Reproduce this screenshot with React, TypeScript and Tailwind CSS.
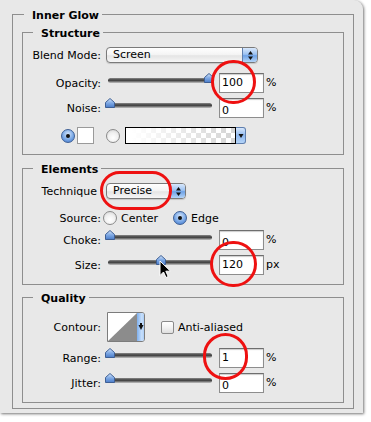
import React from "react";

function Group({
  title,
  labelLeft,
  className,
  children,
}: {
  title: string;
  labelLeft: string;
  className: string;
  children: React.ReactNode;
}) {
  return (
    <div className={`relative shrink-0 border border-[#8e8e8e] ${className}`}>
      <span
        className={`absolute top-0 -translate-y-1/2 bg-[#e8e8e8] pl-[8px] pr-[3px] text-[11px] font-bold leading-[13px] ${labelLeft}`}
      >
        {title}
      </span>
      {children}
    </div>
  );
}

function Label({ children, extra = "" }: { children: React.ReactNode; extra?: string }) {
  return <span className={`w-[78px] shrink-0 text-right text-[11px] leading-[13px] ${extra}`}>{children}</span>;
}

function Thumb({ left, id }: { left: number; id: string }) {
  return (
    <svg className="absolute top-0" style={{ left }} width="10" height="10" viewBox="0 0 10 10">
      <defs>
        <linearGradient id={id} x1="0" y1="0" x2="0" y2="1">
          <stop offset="0" stopColor="#d6e6fb" />
          <stop offset="0.5" stopColor="#7fa9e4" />
          <stop offset="1" stopColor="#4a7cc9" />
        </linearGradient>
      </defs>
      <path d="M5 0.5 L9.5 4.5 V9.5 H0.5 V4.5 Z" fill={`url(#${id})`} stroke="#3e5f94" strokeWidth="1" strokeLinejoin="round" />
    </svg>
  );
}

function Slider({ pos, id }: { pos: number; id: string }) {
  return (
    <div className="relative ml-[4px] h-[20px] w-[110px] shrink-0">
      <div className="absolute left-[3px] right-[3px] top-[5px] h-[5px] rounded-full bg-[linear-gradient(to_bottom,#8a8a8a,#3a3a3a_45%,#8e8e8e_80%,#c8c8c8)]" />
      <Thumb left={pos} id={id} />
    </div>
  );
}

function Field({ value, clipped = false }: { value: string; clipped?: boolean }) {
  return (
    <div className="ml-[4px] h-[20px] w-[45px] shrink-0 overflow-hidden border border-[#8d8d8d] border-t-[#6e6e6e] bg-white shadow-[inset_0_1px_1px_rgba(0,0,0,0.2)]">
      <span className={`block pl-[2px] text-[11px] leading-[18px] ${clipped ? "translate-y-[3px]" : ""}`}>{value}</span>
    </div>
  );
}

function Stepper() {
  return (
    <span className="flex w-[15px] shrink-0 items-center justify-center border-l border-[#5f7fae] bg-[linear-gradient(to_bottom,#d8e8fc,#9cc2f2_45%,#6ea2e6_55%,#b4d4f8)]">
      <svg width="7" height="11" viewBox="0 0 7 11">
        <path d="M3.5 1 L6 4.5 L1 4.5 Z" fill="#111" />
        <path d="M1 6.5 L6 6.5 L3.5 10 Z" fill="#111" />
      </svg>
    </span>
  );
}

function Select({ value, width }: { value: string; width: string }) {
  return (
    <div
      className={`ml-[5px] flex h-[16px] shrink-0 overflow-hidden rounded-[4px] border border-[#7a7a7a] bg-[linear-gradient(to_bottom,#ffffff,#f3f3f3_50%,#e4e4e4_55%,#f6f6f6)] shadow-[0_1px_1px_rgba(0,0,0,0.15)] ${width}`}
    >
      <span className="flex-1 pl-[6px] text-[11px] leading-[14px]">{value}</span>
      <Stepper />
    </div>
  );
}

function Radio({ checked, extra = "" }: { checked: boolean; extra?: string }) {
  return checked ? (
    <span
      className={`flex h-[14px] w-[14px] shrink-0 items-center justify-center rounded-full border border-[#3d5f95] bg-[radial-gradient(circle_at_50%_35%,#d5e6fb,#7aa8e6_55%,#3b72c9)] ${extra}`}
    >
      <span className="h-[4px] w-[4px] rounded-full bg-[#111]" />
    </span>
  ) : (
    <span
      className={`h-[14px] w-[14px] shrink-0 rounded-full border border-[#8a8a8a] bg-[radial-gradient(circle_at_50%_65%,#ffffff,#f0f0f0_50%,#cfcfcf)] ${extra}`}
    />
  );
}

export default function App() {
  return (
    <div className="h-[422px] w-[371px] bg-white font-['DejaVu_Sans',sans-serif] text-black">
      <div className="relative h-[413px] w-[363px] rounded-tr-[9px] bg-[#e8e8e8] pl-[12px] pt-[14px] shadow-[1px_1px_3px_rgba(0,0,0,0.55)]">
        <Group title="Inner Glow" labelLeft="left-[11px]" className="flex h-[395px] w-[342px] flex-col pl-[9px] pt-[17px]">
          {/* Structure */}
          <Group title="Structure" labelLeft="left-[10px]" className="flex h-[123px] w-[322px] flex-col pt-[13px]">
            <div className="flex h-[18px] items-center">
              <Label>Blend Mode:</Label>
              <Select value="Screen" width="w-[152px]" />
            </div>
            <div className="mt-[9px] flex h-[20px] items-center">
              <Label>Opacity:</Label>
              <Slider pos={99} id="t1" />
              <Field value="100" />
              <span className="ml-[2px] text-[11px]">%</span>
            </div>
            <div className="mt-[5px] flex h-[20px] items-center">
              <Label>Noise:</Label>
              <Slider pos={0} id="t2" />
              <Field value="0" clipped />
              <span className="ml-[2px] text-[11px]">%</span>
            </div>
            <div className="mt-[9px] flex h-[17px] items-center">
              <Radio checked extra="ml-[38px]" />
              <span className="ml-[2px] h-[17px] w-[17px] shrink-0 border border-[#9a9a9a] bg-white" />
              <Radio checked={false} extra="ml-[12px]" />
              <span className="ml-[5px] h-[17px] w-[111px] shrink-0 border border-black bg-[image:linear-gradient(to_right,#ffffff_5%,rgba(255,255,255,0)_95%),repeating-conic-gradient(#d6d6d6_0_25%,#ffffff_0_50%)] bg-[length:100%_100%,10px_10px]" />
              <span className="flex h-[17px] w-[10px] shrink-0 items-center justify-center rounded-r-[3px] border border-l-0 border-[#5f7fae] bg-[linear-gradient(to_bottom,#d8e8fc,#8fb8ef_50%,#b4d4f8)]">
                <svg width="6" height="6" viewBox="0 0 6 6">
                  <path d="M0.5 1 L5.5 1 L3 5 Z" fill="#111" />
                </svg>
              </span>
            </div>
          </Group>

          {/* Elements */}
          <Group title="Elements" labelLeft="left-[10px]" className="mt-[13px] flex h-[117px] w-[322px] flex-col pt-[13px]">
            <div className="flex h-[18px] items-center">
              <Label extra="pr-[4px]">Technique</Label>
              <Select value="Precise" width="w-[80px]" />
            </div>
            <div className="mt-[10px] flex h-[16px] items-center">
              <Label>Source:</Label>
              <Radio checked={false} extra="ml-[2px]" />
              <span className="ml-[4px] text-[11px] leading-[13px]">Center</span>
              <Radio checked extra="ml-[15px]" />
              <span className="ml-[4px] text-[11px] leading-[13px]">Edge</span>
            </div>
            <div className="mt-[4px] flex h-[20px] items-center">
              <Label>Choke:</Label>
              <Slider pos={0} id="t3" />
              <Field value="0" clipped />
              <span className="ml-[2px] text-[11px]">%</span>
            </div>
            <div className="mt-[5px] flex h-[20px] items-center">
              <Label>Size:</Label>
              <Slider pos={51} id="t4" />
              <Field value="120" />
              <span className="ml-[2px] text-[11px]">px</span>
            </div>
          </Group>

          {/* Quality */}
          <Group title="Quality" labelLeft="left-[10px]" className="mt-[12px] flex h-[106px] w-[322px] flex-col pt-[14px]">
            <div className="flex h-[30px] items-center">
              <Label>Contour:</Label>
              <div className="ml-[6px] flex h-[30px] w-[38px] shrink-0 overflow-hidden rounded-r-[3px] border border-[#7c7c7c] bg-white">
                <svg width="29" height="28" viewBox="0 0 29 28" className="shrink-0">
                  <rect width="29" height="28" fill="#fff" />
                  <path d="M0 28 L29 0 L29 28 Z" fill="#8c8c8c" />
                </svg>
                <span className="flex w-[8px] shrink-0 items-center justify-center bg-[linear-gradient(to_right,#7fb0ee,#c9e0fb_60%,#9cc4f3)]">
                  <svg width="6" height="8" viewBox="0 0 6 8">
                    <path d="M0.5 2 L5.5 2 L3 7 Z" fill="#111" />
                    <rect x="2" y="0" width="2" height="2" fill="#111" />
                  </svg>
                </span>
              </div>
              <span className="ml-[16px] h-[13px] w-[13px] shrink-0 rounded-[2px] border border-[#8a8a8a] bg-[linear-gradient(to_bottom,#ffffff,#f2f2f2_50%,#dedede)]" />
              <span className="ml-[4px] text-[11px] leading-[13px]">Anti-aliased</span>
            </div>
            <div className="mt-[6px] flex h-[20px] items-center">
              <Label>Range:</Label>
              <Slider pos={0} id="t5" />
              <Field value="1" />
              <span className="ml-[2px] text-[11px]">%</span>
            </div>
            <div className="mt-[5px] flex h-[20px] items-center">
              <Label>Jitter:</Label>
              <Slider pos={0} id="t6" />
              <Field value="0" clipped />
              <span className="ml-[2px] text-[11px]">%</span>
            </div>
          </Group>
        </Group>

        {/* annotation circles */}
        <span className="pointer-events-none absolute left-[211px] top-[60px] h-[44px] w-[45px] rounded-full border-[3px] border-[#ee1111]" />
        <span className="pointer-events-none absolute left-[100px] top-[171px] h-[39px] w-[72px] rounded-full border-[3px] border-[#ee1111]" />
        <span className="pointer-events-none absolute left-[210px] top-[241px] h-[46px] w-[47px] rounded-full border-[3px] border-[#ee1111]" />
        <span className="pointer-events-none absolute left-[203px] top-[333px] h-[47px] w-[45px] rounded-full border-[3px] border-[#ee1111]" />

        {/* mouse cursor */}
        <svg className="pointer-events-none absolute left-[159px] top-[260px]" width="13" height="20" viewBox="0 0 13 20">
          <path d="M1 1 L1 15.5 L4.5 12 L7 17.5 L9.2 16.5 L6.8 11.2 L11.5 11.2 Z" fill="#000" stroke="#fff" strokeWidth="1" strokeLinejoin="round" />
        </svg>
      </div>
    </div>
  );
}
